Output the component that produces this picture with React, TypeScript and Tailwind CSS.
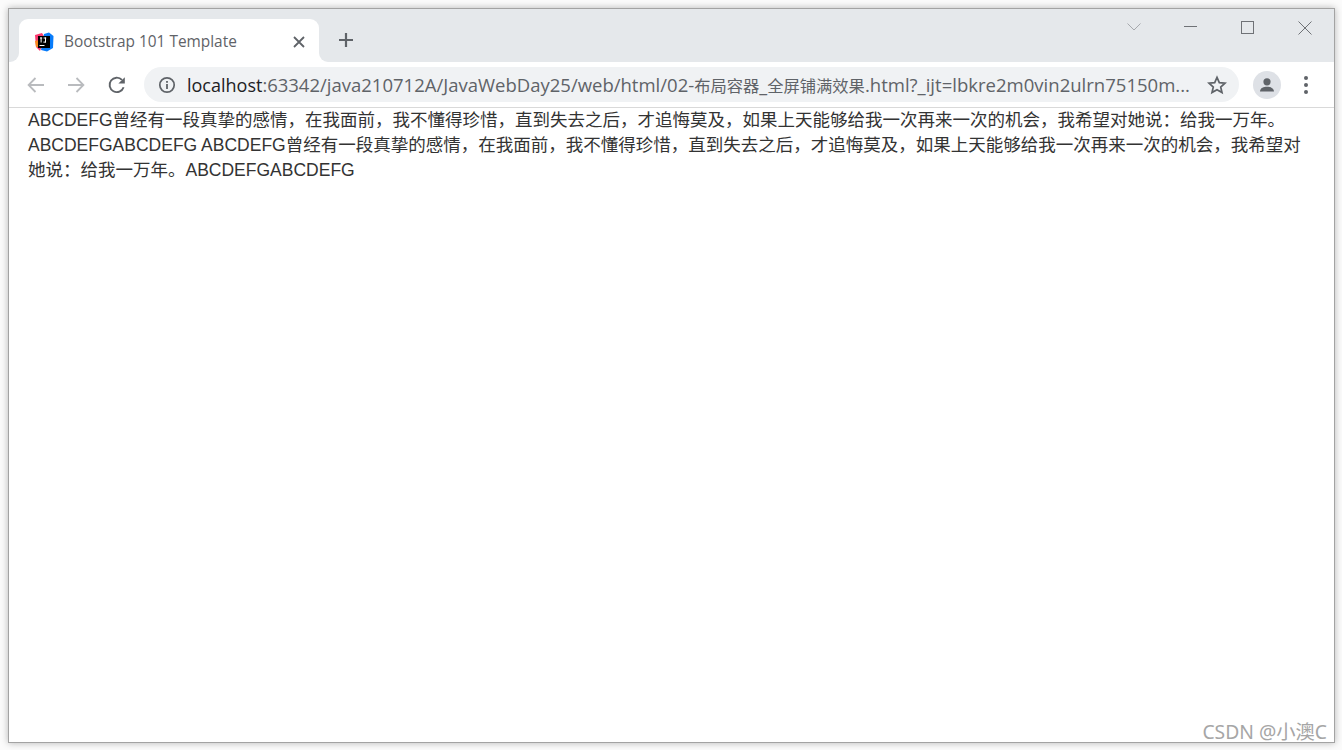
import React from "react";

const para = "曾经有一段真挚的感情，在我面前，我不懂得珍惜，直到失去之后，才追悔莫及，如果上天能够给我一次再来一次的机会，我希望对她说：给我一万年。";

function Logo() {
  return (
    <svg width="20" height="20" viewBox="0 0 20 20" className="shrink-0">
      <path d="M1 3 L8 1 L11 6 L6 19 L2 15 Z" fill="#fb3a70" />
      <path d="M1 9 L5 8 L6 15 L2 15 Z" fill="#f98b1f" />
      <path d="M10 2 L15 0.5 L19.5 4 L19 16 L13 19.5 L7 18 Z" fill="#087cfa" />
      <rect x="4" y="4" width="12" height="12" fill="#000" />
      <rect x="5.5" y="13" width="5" height="1" fill="#fff" />
      <rect x="6" y="5.5" width="2.2" height="1" fill="#fff" />
      <rect x="6.6" y="5.5" width="1" height="5" fill="#fff" />
      <rect x="9.6" y="5.5" width="2.6" height="1" fill="#fff" />
      <rect x="11" y="5.5" width="1" height="5" fill="#fff" />
      <rect x="9.4" y="9.6" width="2.4" height="1" fill="#fff" />
    </svg>
  );
}

function Flare({ side }: { side: "left" | "right" }) {
  return (
    <div className="h-[9px] w-[9px] shrink-0 bg-white">
      <div className={side === "left" ? "h-full w-full rounded-br-[9px] bg-[#e5e8eb]" : "h-full w-full rounded-bl-[9px] bg-[#e5e8eb]"} />
    </div>
  );
}

export default function App() {
  return (
    <div className="h-[750px] w-[1342px] overflow-hidden bg-[#fbfbfb] pt-2 pl-2 font-['Liberation_Sans',sans-serif]">
      <div className="relative flex h-[735px] w-[1327px] flex-col border border-[#a3a3a3] bg-white shadow-[0_0_7px_rgba(0,0,0,0.28)]">
        {/* Tab strip */}
        <div className="flex h-[53px] items-end bg-[#e5e8eb] pl-px">
          <Flare side="left" />
          <div className="flex h-[43px] w-[300px] items-center rounded-t-[9px] bg-white pl-[15px] pr-[14px] pt-[3px]">
            <Logo />
            <span className="ml-[10px] flex-1 font-['Open_Sans',sans-serif] text-[15.4px] text-[#5f6368]">Bootstrap 101 Template</span>
            <svg width="12" height="12" viewBox="0 0 12 12" fill="none" stroke="#5f6368" strokeWidth="1.8">
              <path d="M1 1 L11 11 M11 1 L1 11" />
            </svg>
          </div>
          <Flare side="right" />
          <div className="ml-[10px] flex h-[43px] items-center pb-px">
            <svg width="16" height="16" viewBox="0 0 16 16" fill="none" stroke="#5f6368" strokeWidth="2.2">
              <path d="M8 1 V15 M1 8 H15" />
            </svg>
          </div>
          <div className="ml-auto flex h-full items-start pr-[22px] pt-[12px]">
            <svg width="14" height="8" viewBox="0 0 14 8" fill="none" stroke="#a6a9ad" strokeWidth="1" className="mt-[2px]">
              <path d="M0.5 0.5 L7 7 L13.5 0.5" />
            </svg>
            <div className="ml-[43px] mt-[5px] h-px w-[13px] bg-[#6f7276]" />
            <div className="ml-[44px] h-[13px] w-[13px] border border-[#6f7276]" />
            <svg width="14" height="14" viewBox="0 0 14 14" fill="none" stroke="#6f7276" strokeWidth="1" className="ml-[44px]">
              <path d="M0.5 0.5 L13.5 13.5 M13.5 0.5 L0.5 13.5" />
            </svg>
          </div>
        </div>
        {/* Toolbar */}
        <div className="flex h-[46px] items-center border-b border-[#d9d9d9] bg-white pl-[17px]">
          <svg width="20" height="20" viewBox="0 0 20 20" fill="none" stroke="#b9bbbe" strokeWidth="1.8">
            <path d="M18 10 H3 M9.5 3 L2.6 10 L9.5 17" />
          </svg>
          <svg width="20" height="20" viewBox="0 0 20 20" fill="none" stroke="#b9bbbe" strokeWidth="1.8" className="ml-[20px]">
            <path d="M2 10 H17 M10.5 3 L17.4 10 L10.5 17" />
          </svg>
          <svg width="20" height="20" viewBox="0 0 20 20" fill="none" stroke="#5f6368" strokeWidth="1.9" className="ml-[21px]">
            <path d="M16.6 12.2 A7.2 7.2 0 1 1 15 4.9" />
            <path d="M17.8 2.2 V8.6 H11.4 Z" fill="#5f6368" stroke="none" />
          </svg>
          <div className="ml-[17px] flex h-[35px] w-[1095px] items-center rounded-full bg-[#f0f2f4] pl-[14px] pr-[12px]">
            <svg width="18" height="18" viewBox="0 0 18 18" fill="none" className="shrink-0">
              <circle cx="9" cy="9" r="7.2" stroke="#5f6368" strokeWidth="1.7" />
              <rect x="8.1" y="8" width="1.8" height="5" fill="#5f6368" />
              <rect x="8.1" y="5" width="1.8" height="1.8" fill="#5f6368" />
            </svg>
            <span className="ml-[11px] flex-1 overflow-hidden whitespace-nowrap font-['Open_Sans','Noto_Sans_CJK_SC',sans-serif] text-[18px] text-[#5f6368]">
              <span className="text-[#202124]">localhost</span>
              <span>:</span>
              <span className="text-[18.5px]">63342/java210712A/JavaWebDay25/web/html/02-</span>
              <span className="font-['Noto_Sans_CJK_SC',sans-serif] text-[16.3px]">布局容器</span>
              <span>_</span>
              <span className="font-['Noto_Sans_CJK_SC',sans-serif] text-[16.3px]">全屏铺满效果</span>
              <span className="text-[18.55px]">.html?_ijt=lbkre2m0vin2ulrn75150m...</span>
            </span>
            <svg width="20" height="20" viewBox="0 0 20 20" fill="none" stroke="#5f6368" strokeWidth="1.7" className="ml-[14px] shrink-0">
              <path d="M10 2.4 L12.3 7.6 L18 8.2 L13.7 12 L15 17.6 L10 14.7 L5 17.6 L6.3 12 L2 8.2 L7.7 7.6 Z" />
            </svg>
          </div>
          <div className="ml-[14px] flex h-[28px] w-[28px] items-center justify-center rounded-full bg-[#dee1e6]">
            <svg width="18" height="18" viewBox="0 0 18 18" fill="#5f6368">
              <circle cx="9" cy="5.8" r="3.6" />
              <path d="M2 15.5 C2 11.8 6 10.8 9 10.8 C12 10.8 16 11.8 16 15.5 Z" />
            </svg>
          </div>
          <div className="ml-[23px] flex flex-col gap-[3px]">
            <div className="h-[4px] w-[4px] rounded-full bg-[#5f6368]" />
            <div className="h-[4px] w-[4px] rounded-full bg-[#5f6368]" />
            <div className="h-[4px] w-[4px] rounded-full bg-[#5f6368]" />
          </div>
        </div>
        {/* Page */}
        <div className="flex-1 px-[19px] font-['Liberation_Sans','Noto_Sans_CJK_SC',sans-serif] text-[17.5px] leading-[25px] text-[#333]">
          ABCDEFG{para}ABCDEFGABCDEFG ABCDEFG{para}ABCDEFGABCDEFG
        </div>
        <div className="absolute bottom-[-2px] right-[7px] font-['Noto_Sans','Noto_Sans_CJK_SC',sans-serif] text-[19.3px] leading-[24px] text-[#a6a6a6]">CSDN @小澳C</div>
      </div>
    </div>
  );
}
